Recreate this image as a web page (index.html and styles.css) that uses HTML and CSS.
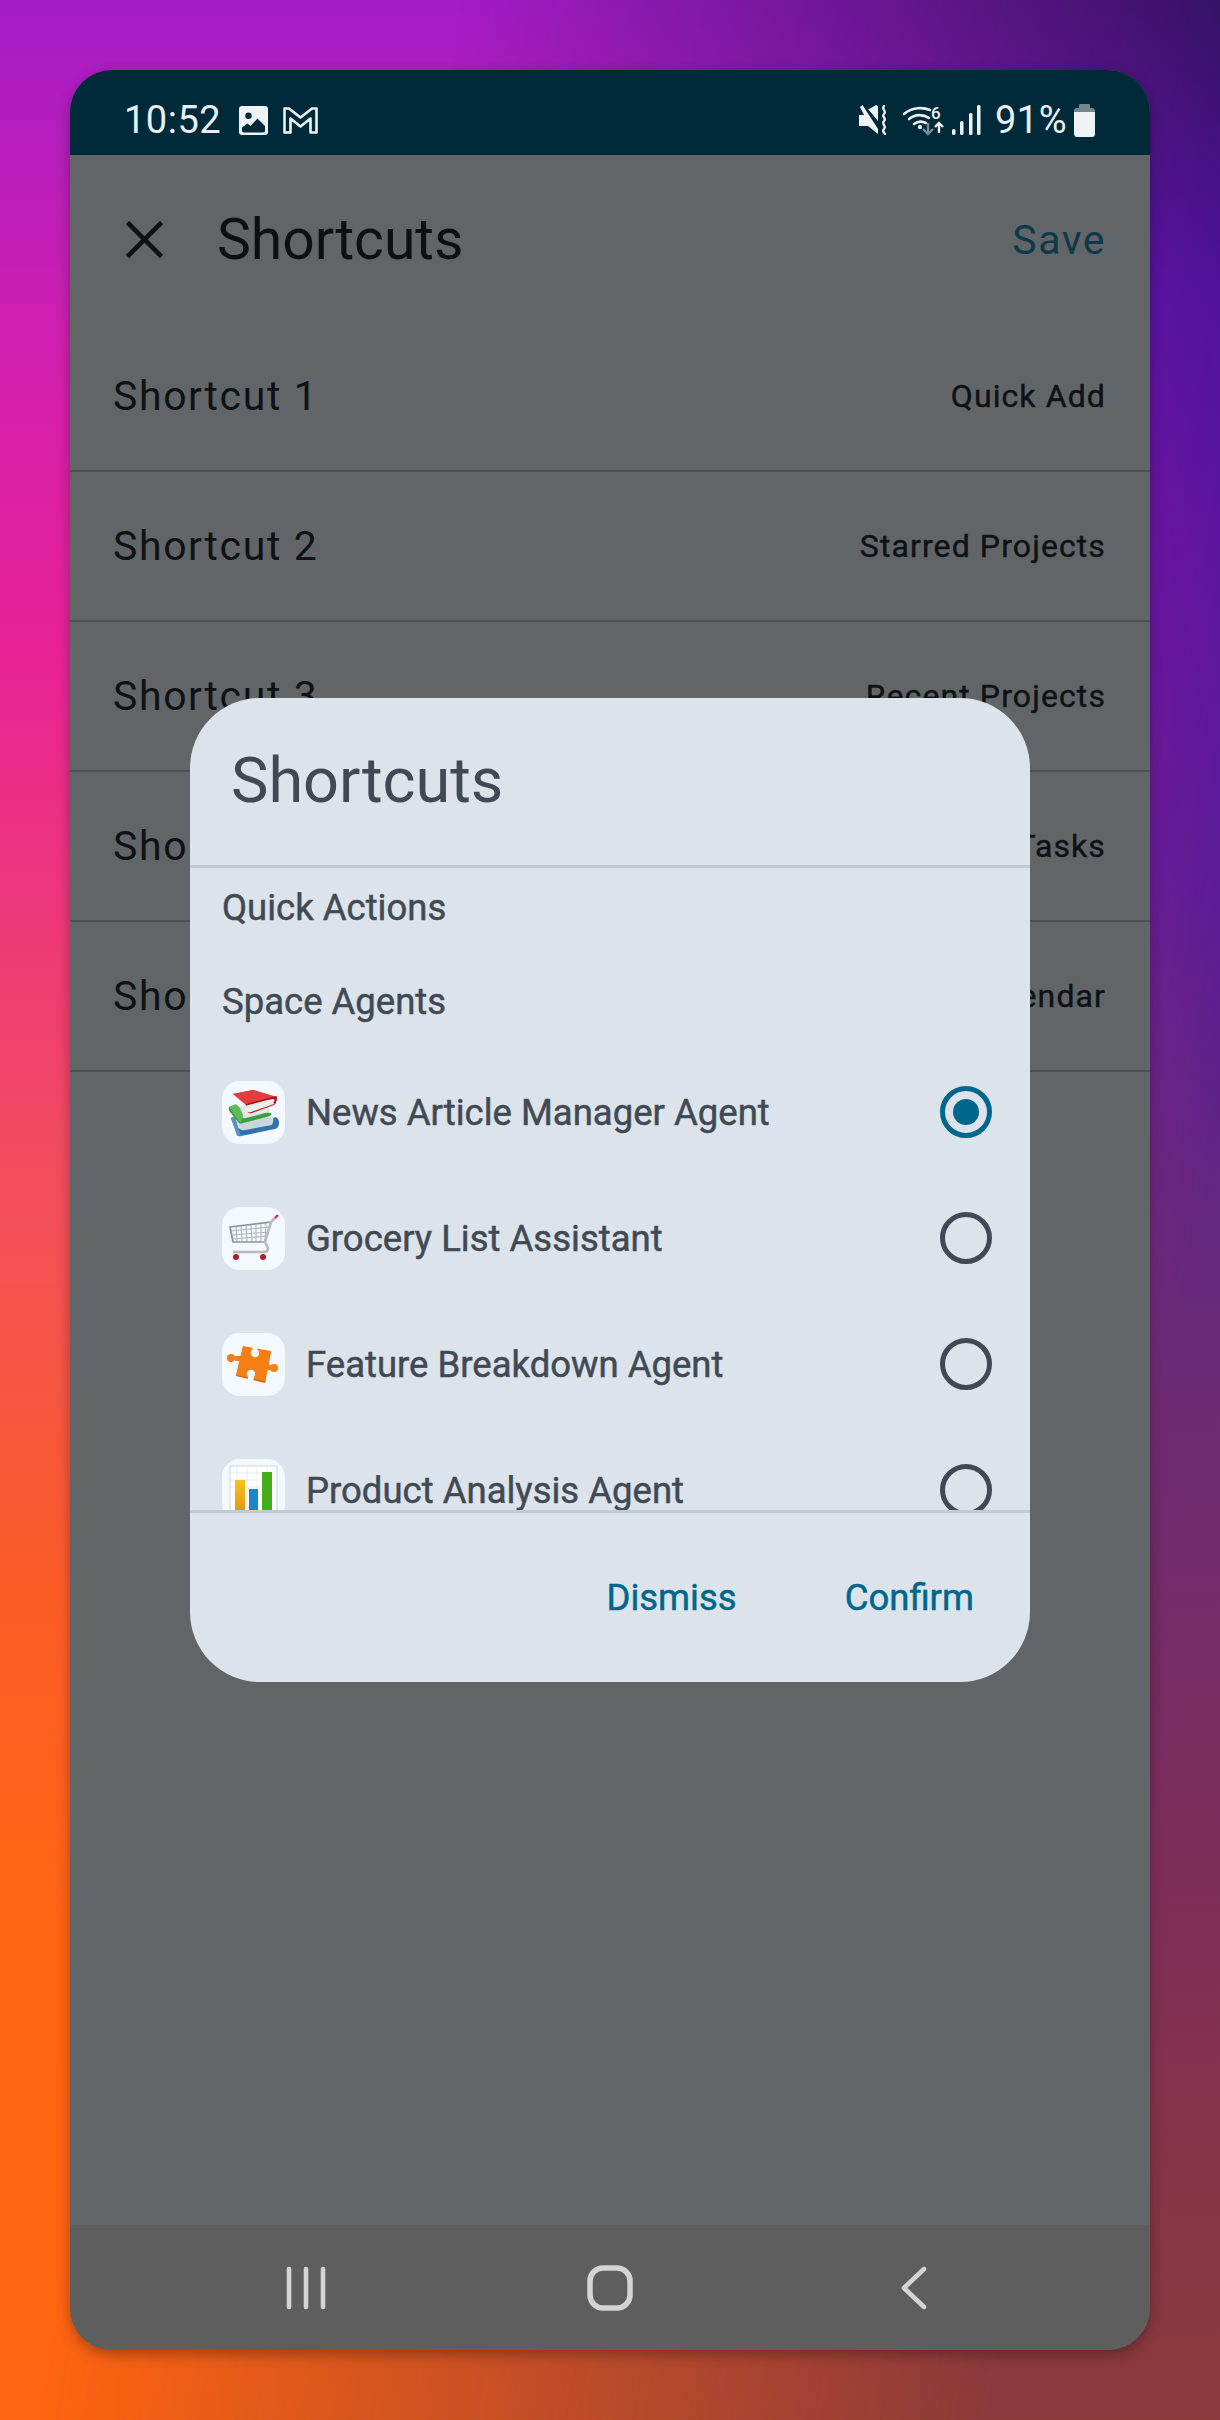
FILE: index.html
```html
<!DOCTYPE html>
<html lang="en">

<head>
    <meta charset="UTF-8">
    <meta name="viewport" content="width=device-width, initial-scale=1.0">
    <title>Shortcuts</title>
    <link rel="stylesheet" href="styles.css">
</head>

<body>
    <div class="wallpaper">
        <div class="phone">
            <div class="status-bar">
                <div class="status-left">
                    <span class="time">10:52</span>
                    <svg class="ic-photo" viewBox="0 0 29 29">
                        <path fill="#eef3f5" fill-rule="evenodd" d="M3 0h23a3 3 0 0 1 3 3v23a3 3 0 0 1-3 3H3a3 3 0 0 1-3-3V3a3 3 0 0 1 3-3zM9.500 6.500a3.200 3.200 0 1 0 0 6.400a3.200 3.200 0 1 0 0-6.400zM3 24.500a2 2 0 0 0 2 2h19a2 2 0 0 0 2-2v-4.500l-7.500-7.500l-7 7.500l-3-2.500l-5.500 4z"/>
                    </svg>
                    <svg class="ic-mail" viewBox="0 0 35 27">
                        <path fill="none" stroke="#eef3f5" stroke-width="2.600" stroke-linejoin="round" d="M1.500 1.500h4.500l11.500 9l11.500-9h4.500v24h-6v-14l-10 8l-10-8v14h-6z"/>
                    </svg>
                </div>
                <div class="status-right">
                    <svg class="ic-mute" viewBox="0 0 30 30">
                        <path fill="#eef3f5" d="M1 10h5L2 2l2.500-2L20 24v5L10 21H1z"/>
                        <path fill="#eef3f5" d="M20 1v15L10 4l2-.500 6-3.500z"/>
                        <path fill="none" stroke="#eef3f5" stroke-width="2.400" stroke-linecap="round" d="M26 1c-3 3 3 5 0 8c-3 3 3 4 0 7c-3 3 3 5 0 8c-1 1-1 3 1 5"/>
                    </svg>
                    <svg class="ic-wifi" viewBox="0 0 41 32">
                        <g fill="none" stroke="#eef3f5" stroke-width="2.600" stroke-linecap="round">
                            <path d="M1 10c8-7 19-7 26-4"/>
                            <path d="M6 15c6-5 14-5 20-1"/>
                            <path d="M11 20c4-3 8-3 12-1"/>
                        </g>
                        <circle cx="17" cy="23" r="2.200" fill="#eef3f5"/>
                        <path fill="none" stroke="#7c8c94" stroke-width="2.400" d="M25 19v11M20 25l5 5l5-5"/>
                        <path fill="none" stroke="#eef3f5" stroke-width="2.400" d="M36 29V19M32 23l4-4l4 4"/>
                        <text class="wifi-six" x="28" y="15">6</text>
                    </svg>
                    <svg class="ic-signal" viewBox="0 0 29 30">
                        <rect x="0" y="24" width="3.500" height="6" rx="1.500" fill="#eef3f5"/>
                        <rect x="8" y="16" width="3.500" height="14" rx="1.500" fill="#eef3f5"/>
                        <rect x="17" y="8" width="3.500" height="22" rx="1.500" fill="#eef3f5"/>
                        <rect x="25" y="0" width="3.500" height="30" rx="1.500" fill="#eef3f5"/>
                    </svg>
                    <span class="battery-pct">91%</span>
                    <svg class="ic-battery" viewBox="0 0 21 33">
                        <path fill="#76868e" d="M6 0h9a1 1 0 0 1 1 1v3H5V1a1 1 0 0 1 1-1zM3 4h15a3 3 0 0 1 3 3v2H0V7a3 3 0 0 1 3-3z"/>
                        <path fill="#eef3f5" d="M0 8h21v22a3 3 0 0 1-3 3H3a3 3 0 0 1-3-3z"/>
                    </svg>
                </div>
            </div>

            <div class="content">
                <div class="app-bar">
                    <svg class="ic-close" viewBox="0 0 37 37">
                        <path fill="none" stroke="#0d1113" stroke-width="4.600" d="M1.500 1.500l34 34M35.500 1.500l-34 34"/>
                    </svg>
                    <div class="app-title">Shortcuts</div>
                    <div class="save">Save</div>
                </div>

                <div class="row"><span class="row-name">Shortcut 1</span><span class="row-value">Quick Add</span></div>
                <div class="row"><span class="row-name">Shortcut 2</span><span class="row-value">Starred Projects</span></div>
                <div class="row"><span class="row-name">Shortcut 3</span><span class="row-value">Recent Projects</span></div>
                <div class="row"><span class="row-name">Shortcut 4</span><span class="row-value">Today's Tasks</span></div>
                <div class="row"><span class="row-name">Shortcut 5</span><span class="row-value">Calendar</span></div>

                <div class="dialog-layer">
                    <div class="dialog">
                        <div class="dialog-title">Shortcuts</div>
                        <div class="dialog-list">
                            <div class="section first">Quick Actions</div>
                            <div class="section second">Space Agents</div>

                            <div class="agent">
                                <div class="tile">
                                    <svg viewBox="0 0 63 63">
                                        <!-- azul -->
                                        <path fill="#2f73ad" d="M9 37l6 17q1 2 4 1l34-7q4-1 4-6q0-4-3-6l-3 1l-4 6l-28 5l-3-1l-3-12z"/>
                                        <path fill="#cbd5db" d="M13 36l5 12q2 2 5 1l27-5q2-4 1-8z"/>
                                        <path fill="#5a90bd" d="M9 37l4-2l3 11l3 9q-3 0-4-1z"/>
                                        <!-- verde -->
                                        <path fill="#3f9e3e" d="M7 26q-1 3 1 5l9 11q2 1 4 0l27-7q2-2 1-3l-7-1l-23 5l-6-12z"/>
                                        <path fill="#e2e6e4" d="M14 26l6 10q2 2 4 1l23-6q1-3 0-6l-12-4z"/>
                                        <path fill="#5fbb58" d="M7 26l7-3l4 4l3 7l-2 7q-2 0-3-2z"/>
                                        <!-- rojo -->
                                        <path fill="#c41a22" d="M11 13l20-4l23 7v3q1 3-2 5l-22 8q-3 1-4-1l-2-8z"/>
                                        <path fill="#eceeec" d="M16 18l8 6l1 6q2 2 4 1l23-8q1-3 0-5l-22 2z"/>
                                        <path fill="#e53c3e" d="M11 13l20-4l23 7l-26 7l-4 1z"/>
                                        <path fill="none" stroke="#a81219" stroke-width="1.600" d="M24 24l3-1l27-7q1 3-2 6"/>
                                    </svg>
                                </div>
                                <span class="agent-name">News Article Manager Agent</span>
                                <span class="radio on"></span>
                            </div>

                            <div class="agent">
                                <div class="tile">
                                    <svg viewBox="0 0 63 63">
                                        <g fill="none" stroke="#b2b6b8" stroke-width="1.100">
                                            <path d="M9 24l39-4M10 28l37-3M10 32l35-3"/>
                                            <path d="M14 20l1 15M19 19l1 16M24 19l1 16M29 18l1 17M34 18v17M39 17v18M44 16l-1 19"/>
                                        </g>
                                        <path fill="none" stroke="#8f9497" stroke-width="1.700" d="M8 20l41-5l-6 20H11z"/>
                                        <path fill="none" stroke="#b8bcbe" stroke-width="2.600" stroke-linecap="round" d="M54 10l-5 5l-6 20l3 6q0 4-4 4H12"/>
                                        <path fill="none" stroke="#cc3b45" stroke-width="2.400" d="M53 11l3-3"/>
                                        <circle cx="14" cy="50" r="3" fill="#a92028"/>
                                        <circle cx="41" cy="50" r="3" fill="#a92028"/>
                                    </svg>
                                </div>
                                <span class="agent-name">Grocery List Assistant</span>
                                <span class="radio"></span>
                            </div>

                            <div class="agent">
                                <div class="tile">
                                    <svg viewBox="0 0 63 63">
                                        <path fill="#d9640c" d="M21 14l28 5l-6 31l-29-7z"/>
                                        <path fill="#f57f14" d="M21 13l28 5l-6 30l-29-6z"/>
                                        <path fill="#f57f14" d="M13 23h8v5h-8zM43 32h7v5h-7z"/>
                                        <circle cx="9" cy="25" r="4" fill="#f57f14"/>
                                        <circle cx="52" cy="35" r="4" fill="#f57f14"/>
                                        <circle cx="33" cy="20" r="4.200" fill="#f3f9fe"/>
                                        <path fill="#f3f9fe" d="M30 13h6l-1 4h-4z"/>
                                        <circle cx="29" cy="41" r="4.200" fill="#f3f9fe"/>
                                        <path fill="#f3f9fe" d="M26 44h6l-1 4h-5z"/>
                                    </svg>
                                </div>
                                <span class="agent-name">Feature Breakdown Agent</span>
                                <span class="radio"></span>
                            </div>

                            <div class="agent">
                                <div class="tile">
                                    <svg viewBox="0 0 63 63">
                                        <defs>
                                            <linearGradient id="bar-yellow" x1="0" y1="0" x2="0" y2="1">
                                                <stop offset="0" stop-color="#f5c518"/>
                                                <stop offset="1" stop-color="#e58f12"/>
                                            </linearGradient>
                                        </defs>
                                        <rect x="8" y="7" width="47" height="50" fill="#fdfefe" stroke="#cfd6da"/>
                                        <path fill="none" stroke="#e6ebee" stroke-width="0.800" d="M8 14h47M8 21h47M8 28h47M15 7v50M25 7v50M35 7v50M45 7v50"/>
                                        <rect x="13" y="21" width="10" height="36" fill="url(#bar-yellow)"/>
                                        <rect x="27" y="30" width="9" height="27" fill="#1b86c9"/>
                                        <rect x="40" y="13" width="10" height="44" fill="#45ad17"/>
                                    </svg>
                                </div>
                                <span class="agent-name">Product Analysis Agent</span>
                                <span class="radio"></span>
                            </div>
                        </div>
                        <div class="dialog-actions">
                            <button class="text-btn">Dismiss</button>
                            <button class="text-btn">Confirm</button>
                        </div>
                    </div>
                </div>
            </div>

            <div class="nav-bar">
                <svg class="ic-recents" viewBox="0 0 40 44">
                    <path fill="none" stroke="#d4d4d4" stroke-width="4.600" stroke-linecap="round" d="M3 3v38M20 3v38M37 3v38"/>
                </svg>
                <svg class="ic-home" viewBox="0 0 46 46">
                    <rect x="3" y="3" width="40" height="40" rx="13" fill="none" stroke="#d4d4d4" stroke-width="5.500"/>
                </svg>
                <svg class="ic-back" viewBox="0 0 26 44">
                    <path fill="none" stroke="#d4d4d4" stroke-width="4.600" stroke-linecap="round" stroke-linejoin="round" d="M23 3L3 22l20 19"/>
                </svg>
            </div>
        </div>
    </div>
</body>

</html>
```

FILE: styles.css
```css
* {
    margin: 0;
    padding: 0;
    box-sizing: border-box;
    font-family: Roboto, "Liberation Sans", sans-serif;
}

body {
    width: 1220px;
    height: 2420px;
    overflow: hidden;
}

/* Fondo */
.wallpaper {
    position: relative;
    width: 1220px;
    height: 2420px;
    padding: 70px;
    background: linear-gradient(180deg, #a41cc6 0%, #d01fb0 14%, #ea2296 27%, #f4505a 50%, #fb5c28 65%, #ff6512 80%, #ff6510 100%);
}

.wallpaper::before {
    content: "";
    position: absolute;
    inset: 0;
    background: linear-gradient(180deg, #1a0f4c 0%, #3a109a 12%, #4d13a0 22%, #561a98 36%, #6a2a78 55%, #7c2d5c 75%, #8c3a3a 100%);
    -webkit-mask-image: linear-gradient(100deg, transparent 28%, #000 86%);
    mask-image: linear-gradient(100deg, transparent 28%, #000 86%);
}

.phone {
    position: relative;
    width: 1080px;
    height: 2280px;
    display: flex;
    flex-direction: column;
    border-radius: 42px;
    overflow: hidden;
    background-color: #616568;
    box-shadow: 0 5px 14px rgba(0, 0, 0, 0.3);
}

/* Barra de estado */
.status-bar {
    height: 85px;
    flex-shrink: 0;
    display: flex;
    justify-content: space-between;
    align-items: center;
    padding: 15px 55px 0 54px;
    background-color: #002a39;
    color: #e9f0f3;
}

.status-left,
.status-right {
    display: flex;
    align-items: center;
}

.time,
.battery-pct {
    font-size: 38px;
    line-height: 44px;
    letter-spacing: 0.5px;
}

.ic-photo {
    width: 29px;
    height: 29px;
    margin-left: 18px;
}

.ic-mail {
    width: 35px;
    height: 27px;
    margin-left: 15px;
}

.ic-mute {
    width: 30px;
    height: 30px;
}

.ic-wifi {
    width: 41px;
    height: 32px;
    margin-left: 15px;
}

.wifi-six {
    font-size: 17px;
    font-weight: 500;
    fill: #eef3f5;
}

.ic-signal {
    width: 29px;
    height: 30px;
    margin-left: 8px;
}

.battery-pct {
    margin-left: 14px;
}

.ic-battery {
    width: 21px;
    height: 33px;
    margin-left: 7px;
}

/* Contenido */
.content {
    position: relative;
    flex: 1;
    min-height: 0;
}

.app-bar {
    height: 167px;
    display: flex;
    align-items: center;
    padding: 2px 44px 0 56px;
}

.ic-close {
    width: 37px;
    height: 37px;
}

.app-title {
    margin-left: 54px;
    font-size: 57px;
    color: #0c1012;
}

.save {
    margin-left: auto;
    font-size: 41px;
    letter-spacing: 1.5px;
    color: #0d3a4b;
}

.row {
    height: 150px;
    display: flex;
    justify-content: space-between;
    align-items: center;
    padding: 0 44px 0 43px;
    border-bottom: 2px solid #4d5154;
}

.row-name {
    font-size: 41px;
    letter-spacing: 1.6px;
    color: #0e1214;
}

.row-value {
    font-size: 32px;
    letter-spacing: 1.1px;
    -webkit-text-stroke: 0.4px #0e1214;
    color: #0e1214;
}

/* Dialogo */
.dialog-layer {
    position: absolute;
    inset: 0;
    display: flex;
    justify-content: center;
    align-items: center;
}

.dialog {
    width: 840px;
    height: 984px;
    display: flex;
    flex-direction: column;
    border-radius: 70px;
    overflow: hidden;
    background-color: #dce3ea;
    color: #414a54;
}

.dialog-title {
    height: 170px;
    flex-shrink: 0;
    padding: 48px 42px 0 41px;
    font-size: 63px;
    line-height: 70px;
    border-bottom: 3px solid #c3cad1;
}

.dialog-list {
    flex: 1;
    min-height: 0;
    overflow: hidden;
    padding: 0 38px 0 32px;
}

.section {
    display: flex;
    align-items: center;
    font-size: 36.5px;
    -webkit-text-stroke: 0.5px #414a54;
}

.section.first {
    height: 78px;
}

.section.second {
    height: 103px;
    padding-top: 7px;
}

.agent {
    height: 126px;
    display: flex;
    align-items: center;
}

.tile {
    width: 63px;
    height: 63px;
    flex-shrink: 0;
    border-radius: 18px;
    background-color: #f3f9fe;
}

.tile svg {
    display: block;
    width: 63px;
    height: 63px;
}

.agent-name {
    margin-left: 21px;
    font-size: 36.5px;
    -webkit-text-stroke: 0.5px #414a54;
}

.radio {
    position: relative;
    width: 52px;
    height: 52px;
    margin-left: auto;
    border: 5px solid #414a54;
    border-radius: 50%;
}

.radio.on {
    border-color: #00678c;
}

.radio.on::after {
    content: "";
    position: absolute;
    inset: 8px;
    border-radius: 50%;
    background-color: #00678c;
}

.dialog-actions {
    height: 172px;
    flex-shrink: 0;
    display: flex;
    justify-content: flex-end;
    align-items: center;
    gap: 108px;
    padding: 0 56px 0 0;
    border-top: 3px solid #c3cad1;
}

.text-btn {
    background: none;
    border: none;
    font-size: 36.5px;
    -webkit-text-stroke: 0.5px #00678c;
    color: #00678c;
}

/* Barra de navegacion */
.nav-bar {
    height: 125px;
    flex-shrink: 0;
    display: grid;
    grid-template-columns: 304px 304px 304px;
    justify-content: center;
    justify-items: center;
    align-items: center;
    background-color: #5e5e5e;
}

.ic-recents {
    width: 40px;
    height: 44px;
}

.ic-home {
    width: 46px;
    height: 46px;
}

.ic-back {
    width: 26px;
    height: 44px;
}
```
